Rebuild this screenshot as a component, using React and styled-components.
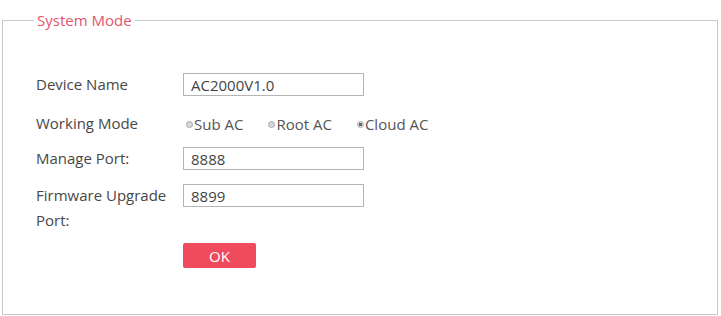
import React from 'react';
import styled, { createGlobalStyle } from 'styled-components';

const GlobalStyle = createGlobalStyle`
    html, body {
        margin: 0;
        padding: 0;
        background: #fff;
    }
    body {
        font-family: "Open Sans", "Noto Sans", sans-serif;
        color: #444;
    }
`;

const modes = [
    { label: 'Sub AC', checked: false },
    { label: 'Root AC', checked: false },
    { label: 'Cloud AC', checked: true },
];

const App = () => {
    return (
        <Page>
            <GlobalStyle />
            <Fieldset>
                <Legend>System Mode</Legend>
                <Form>
                    <Row>
                        <Label>Device Name</Label>
                        <Input defaultValue="AC2000V1.0" />
                    </Row>
                    <Row $radio>
                        <Label>Working Mode</Label>
                        <RadioGroup>
                            {modes.map(m => (
                                <RadioItem key={m.label}>
                                    <Dot $checked={m.checked} />
                                    {m.label}
                                </RadioItem>
                            ))}
                        </RadioGroup>
                    </Row>
                    <Row>
                        <Label>Manage Port:</Label>
                        <Input defaultValue="8888" />
                    </Row>
                    <Row>
                        <Label $wrap>Firmware Upgrade Port:</Label>
                        <Input defaultValue="8899" />
                    </Row>
                    <Row>
                        <span />
                        <OkButton>OK</OkButton>
                    </Row>
                </Form>
            </Fieldset>
        </Page>
    );
};

export default App;

const Page = styled.div`
    padding: 10px 3px 1px 2px;
    width: 721px;
    height: 316px;
    box-sizing: border-box;
`;

const Fieldset = styled.fieldset`
    margin: 0;
    padding: 0 0 44px 33px;
    border: 1px solid #c9c9c9;
    height: 100%;
    box-sizing: border-box;
    min-width: 0;
`;

const Legend = styled.legend`
    margin-left: -2px;
    padding: 0 3px;
    font-size: 15px;
    line-height: 20px;
    color: #e0566d;
`;

const Form = styled.div`
    display: flex;
    flex-direction: column;
    gap: 14px;
    padding-top: 43px;
`;

const Row = styled.div`
    display: grid;
    grid-template-columns: 147px 181px;
    align-items: start;
    padding-top: ${p => (p.$radio ? '2px' : '0')};
    margin-bottom: ${p => (p.$radio ? '-2px' : '0')};
`;

const Label = styled.div`
    font-size: 15px;
    line-height: ${p => (p.$wrap ? '25px' : '23px')};
    margin-top: ${p => (p.$wrap ? '-1px' : '0')};
    width: ${p => (p.$wrap ? '140px' : 'auto')};
    color: #474747;
    white-space: ${p => (p.$wrap ? 'normal' : 'nowrap')};
`;

const Input = styled.input`
    width: 181px;
    height: 23px;
    box-sizing: border-box;
    border: 1px solid #b5b5b5;
    padding: 0 7px;
    font-family: "Open Sans", "Noto Sans", sans-serif;
    font-size: 15px;
    color: #444;
    outline: none;
`;

const RadioGroup = styled.div`
    display: flex;
    align-items: center;
    gap: 25px;
    white-space: nowrap;
    height: 23px;
    margin-left: 3px;
`;

const RadioItem = styled.label`
    display: flex;
    align-items: center;
    font-size: 15px;
    color: #555;
`;

const Dot = styled.span`
    width: 7px;
    height: 7px;
    border-radius: 50%;
    box-sizing: border-box;
    border: 1px solid #aaa;
    background: ${p => (p.$checked ? 'radial-gradient(circle, #666 0 1.5px, #ddd 2px)' : '#d8d8d8')};
    margin-right: 1px;
    margin-top: 1px;
`;

const OkButton = styled.button`
    width: 73px;
    height: 25px;
    border: none;
    border-radius: 2px;
    background: #ef4b5c;
    color: #fff;
    font-family: "Open Sans", "Noto Sans", sans-serif;
    font-size: 15px;
    margin-top: -4px;
    cursor: pointer;
`;
